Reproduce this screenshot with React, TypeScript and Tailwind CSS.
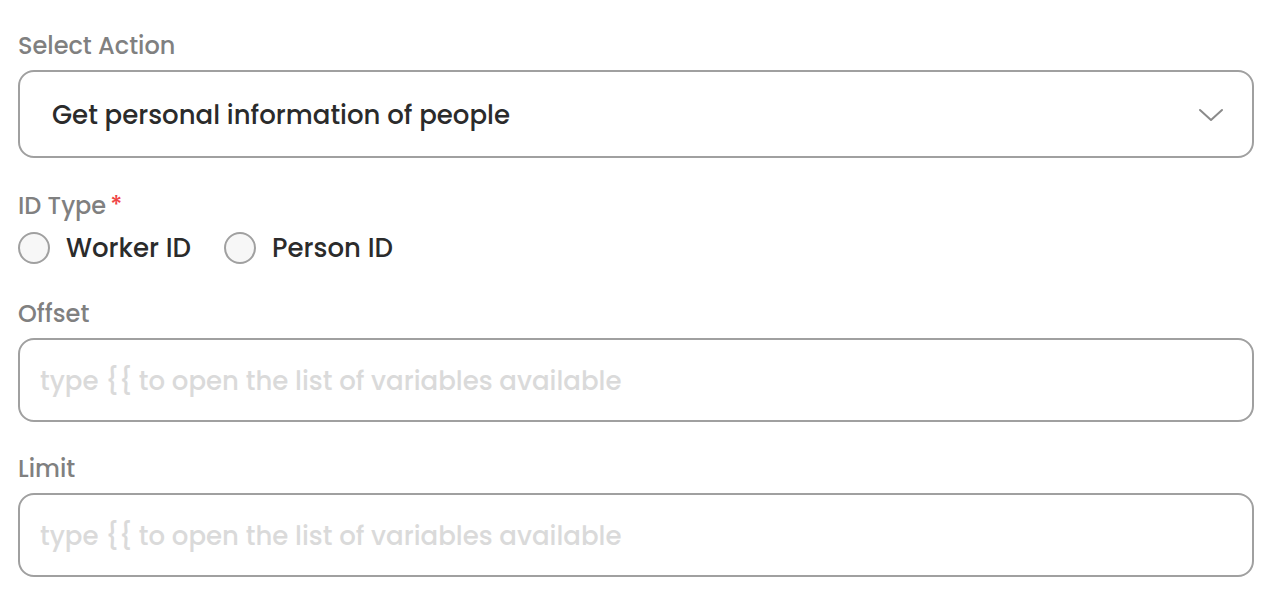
import React, { useState } from 'react';

const FONT = { fontFamily: 'Poppins, Inter, "Noto Sans", sans-serif' };

interface TextFieldProps {
  label: string;
  placeholder: string;
}

const TextField: React.FC<TextFieldProps> = ({ label, placeholder }) => (
  <div className="flex flex-col">
    <label className="text-[24px] leading-[36px] text-[#808080] font-medium">{label}</label>
    <div className="mt-[6px] h-[84px] rounded-[16px] border-2 border-[#a0a0a0] flex items-center px-[20px] pt-[2px]">
      <input
        className="w-full bg-transparent outline-none text-[26px] font-medium text-[#333] placeholder:text-[#dadada]"
        placeholder={placeholder}
        style={FONT}
      />
    </div>
  </div>
);

export default function App() {
  const [idType, setIdType] = useState<string | null>(null);

  return (
    <div className="w-[1272px] h-[606px] bg-white px-[18px] pt-[28px] flex flex-col" style={FONT}>
      {/* 動作選擇 */}
      <div className="flex flex-col w-[1236px]">
        <label className="text-[24px] leading-[36px] text-[#808080] font-medium">Select Action</label>
        <div className="mt-[6px] h-[88px] rounded-[16px] border-2 border-[#a0a0a0] flex items-center justify-between pl-[32px] pr-[28px] pt-[2px]">
          <span className="text-[26px] text-[#2b2b2b] font-medium">Get personal information of people</span>
          <svg width="26" height="16" viewBox="0 0 26 16" fill="none">
            <path d="M2 3 L13 13 L24 3" stroke="#8a8a8a" strokeWidth="2" strokeLinecap="round" strokeLinejoin="round" />
          </svg>
        </div>
      </div>

      {/* ID 類型 */}
      <div className="mt-[30px] flex flex-col">
        <label className="text-[24px] leading-[36px] text-[#808080] font-medium">
          ID Type<span className="text-[#ef4444] ml-[4px]">*</span>
        </label>
        <div className="mt-[6px] flex items-center gap-[33px] h-[36px]">
          {['Worker ID', 'Person ID'].map(opt => (
            <label key={opt} className="flex items-center gap-[16px] cursor-pointer" onClick={() => setIdType(opt)}>
              <span className="w-[32px] h-[32px] rounded-full border-2 border-[#a0a0a0] bg-[#f7f7f7] flex items-center justify-center">
                {idType === opt && <span className="w-[14px] h-[14px] rounded-full bg-[#333]" />}
              </span>
              <span className="text-[26px] text-[#2b2b2b] font-medium">{opt}</span>
            </label>
          ))}
        </div>
      </div>

      <div className="mt-[30px] w-[1236px]">
        <TextField label="Offset" placeholder="type {{ to open the list of variables available" />
      </div>
      <div className="mt-[29px] w-[1236px]">
        <TextField label="Limit" placeholder="type {{ to open the list of variables available" />
      </div>
    </div>
  );
}
